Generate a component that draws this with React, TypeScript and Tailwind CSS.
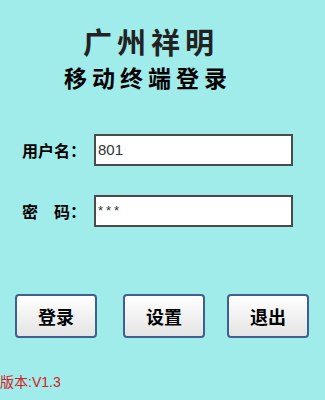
const font = { fontFamily: '"Noto Sans CJK SC", "Liberation Sans", sans-serif' };

function Field({ label, value, spaced }: { label: string; value: string; spaced?: boolean }) {
  return (
    <div className="flex items-center">
      <span className="w-[72px] text-[16px] font-bold leading-none text-black">{label}</span>
      <div
        className={
          spaced
            ? "flex h-[32px] w-[199px] items-center border-2 border-[#4a4a4a] bg-white px-[2px] text-[13px] tracking-[3px] text-[#333]"
            : "flex h-[32px] w-[199px] items-center border-2 border-[#4a4a4a] bg-white px-[2px] text-[15px] text-[#333]"
        }
        style={{ fontFamily: '"Liberation Sans", sans-serif' }}
      >
        {value}
      </div>
    </div>
  );
}

function Btn({ label, className = "" }: { label: string; className?: string }) {
  return (
    <button
      type="button"
      className={`h-[44px] w-[82px] rounded-[4px] border-2 border-[#3f5f8f] bg-gradient-to-b from-white to-[#e4e4e4] text-[18px] font-bold text-black ${className}`}
    >
      {label}
    </button>
  );
}

export default function App() {
  return (
    <div className="h-[400px] w-[325px] bg-[#a0ecea]" style={font}>
      <div className="pl-[83px] pt-[27px] text-[29px] font-bold leading-none tracking-[5px] text-[#222]">
        广州祥明
      </div>
      <div className="pl-[64px] pt-[10px] text-[23px] font-bold leading-none tracking-[5px] text-black">
        移动终端登录
      </div>
      <div className="flex flex-col gap-[29px] pl-[22px] pt-[45px]">
        <Field label="用户名：" value="801" />
        <Field label="密　码：" value="***" spaced />
      </div>
      <div className="flex pl-[15px] pt-[67px]">
        <Btn label="登录" />
        <Btn label="设置" className="ml-[26px]" />
        <Btn label="退出" className="ml-[22px]" />
      </div>
      <div
        className="pt-[37px] text-[14px] leading-none text-[#d42020]"
        style={{ fontFamily: '"Liberation Sans", "Noto Sans CJK SC", sans-serif' }}
      >
        版本:V1.3
      </div>
    </div>
  );
}
